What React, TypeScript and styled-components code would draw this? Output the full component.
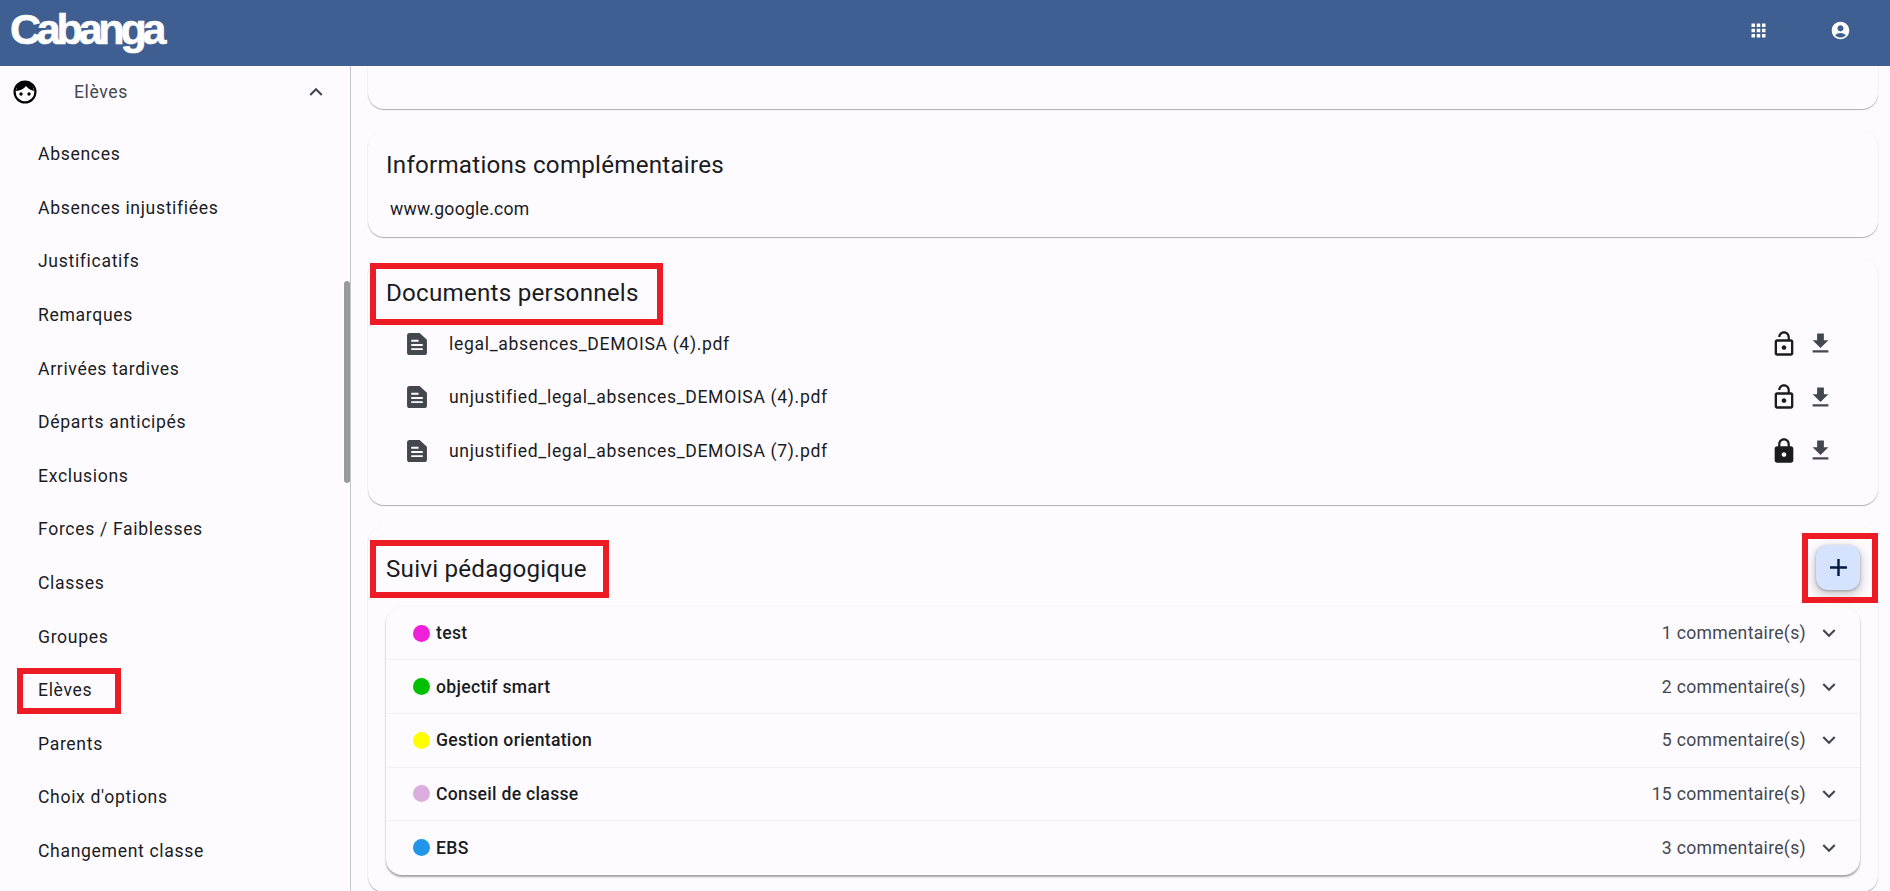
import styled, { createGlobalStyle } from 'styled-components';
import {
    MdAccountCircle,
    MdAdd,
    MdApps,
    MdExpandLess,
    MdExpandMore,
    MdFileDownload,
    MdLock,
    MdLockOpen,
} from 'react-icons/md';

const GlobalStyle = createGlobalStyle`
    html, body {
        margin: 0;
        height: 100%;
        overflow: hidden;
        background: #fdfbff;
        font-family: Roboto, "Liberation Sans", sans-serif;
        color: #1a1c1e;
    }
`;

const Page = styled.div`
    position: relative;
    display: flex;
    flex-direction: column;
    height: 100vh;
    overflow: hidden;
`;

const Header = styled.header`
    flex: none;
    height: 66px;
    display: flex;
    align-items: center;
    background: #3f5f92;
    color: #fff;
`;

const Logo = styled.div`
    font-family: "Liberation Sans", Arial, sans-serif;
    font-weight: 700;
    font-size: 43px;
    line-height: 50px;
    letter-spacing: -4.2px;
    -webkit-text-stroke: 0.6px #fff;
    margin: -8px 0 0 10px;
`;

const HeaderIcons = styled.div`
    margin-left: auto;
    display: flex;
    align-items: center;
    gap: 61px;
    padding: 0 39px 6px 0;
    svg {
        display: block;
    }
`;

const Body = styled.div`
    flex: 1;
    min-height: 0;
    display: flex;
`;

const Sidebar = styled.nav`
    position: relative;
    flex: none;
    width: 350px;
    border-right: 1px solid #c4c6d0;
    overflow: hidden;
`;

const Thumb = styled.div`
    position: absolute;
    top: 215px;
    right: 0;
    width: 6px;
    height: 202px;
    border-radius: 3px;
    background: #9a9a9a;
`;

const GroupRow = styled.div`
    height: 52px;
    display: flex;
    align-items: center;
    padding: 0 21px 0 13px;
    font-size: 17.6px;
    letter-spacing: 0.6px;
    color: #44474e;
`;

const GroupLabel = styled.span`
    margin-left: 37px;
    flex: 1;
`;

const SubList = styled.div`
    margin-top: 9.5px;
`;

const SubItem = styled.div`
    height: 53.6px;
    display: flex;
    align-items: center;
    padding-left: 38px;
    font-size: 17.6px;
    letter-spacing: 0.66px;
    color: #1a1c1e;
`;

const Main = styled.main`
    flex: 1;
    min-width: 0;
    display: flex;
    flex-direction: column;
    gap: 22px;
    padding: 0 12px 0 17px;
    overflow: hidden;
`;

const Card = styled.section<{ $height?: number }>`
    flex: none;
    box-sizing: border-box;
    height: ${(p) => (p.$height ? `${p.$height}px` : 'auto')};
    background: #fdfbff;
    border-radius: 16px;
    box-shadow: 0 1px 1px rgba(0, 0, 0, 0.3), 0 0 2px rgba(0, 0, 0, 0.04);
`;

const ClippedCard = styled(Card)`
    margin-top: -30px;
`;

const InfoCard = styled(Card)`
    padding: 20px 16px 16px 18px;
`;

const DocsCard = styled(Card)`
    padding: 20px 0 27px 18px;
`;

const TrackCard = styled(Card)`
    padding: 18px 18px 0;
`;

const Title = styled.h2`
    margin: 0;
    font-size: 24.2px;
    line-height: 28px;
    font-weight: 400;
    letter-spacing: 0.22px;
    color: #1a1c1e;
`;

const InfoText = styled.div`
    margin: 18px 0 0 4px;
    font-size: 17.6px;
    line-height: 24px;
    letter-spacing: 0.25px;
`;

const DocList = styled.div`
    margin-top: 10px;
`;

const DocRow = styled.div`
    height: 53.6px;
    display: flex;
    align-items: center;
    padding: 0 44px 0 21px;
    font-size: 17.6px;
    letter-spacing: 0.66px;
`;

const DocName = styled.span`
    margin-left: 22px;
    flex: 1;
`;

const DocActions = styled.div`
    display: flex;
    align-items: center;
    gap: 9px;
    svg {
        display: block;
    }
`;

const DownloadIcon = styled(MdFileDownload)`
    color: #44474e;
`;

const TrackHeader = styled.div`
    height: 45px;
    display: flex;
    align-items: center;
    justify-content: space-between;
`;

const TrackTitle = styled(Title)`
    padding-top: 3px;
`;

const Fab = styled.button`
    width: 44px;
    height: 45px;
    padding: 0;
    border: none;
    border-radius: 12px;
    display: flex;
    align-items: center;
    justify-content: center;
    background: #d6e3ff;
    color: #001b3e;
    box-shadow: 0 1px 3px rgba(0, 0, 0, 0.3), 0 4px 8px 3px rgba(0, 0, 0, 0.15);
`;

const Accordion = styled.div`
    margin-top: 17px;
    border-radius: 16px;
    background: #fdfbff;
    box-shadow: 0 2px 2px rgba(0, 0, 0, 0.35), 0 0 3px rgba(0, 0, 0, 0.04);
`;

const AccordionRow = styled.div`
    box-sizing: border-box;
    height: 53.6px;
    display: flex;
    align-items: center;
    padding: 0 18px 0 27px;
    font-size: 17.6px;
    letter-spacing: 0.3px;
    border-bottom: 1px solid rgba(0, 0, 0, 0.045);
    &:last-child {
        border-bottom: none;
    }
`;

const Dot = styled.span<{ $color: string }>`
    flex: none;
    width: 17px;
    height: 17px;
    border-radius: 50%;
    background: ${(p) => p.$color};
`;

const RowName = styled.span`
    margin-left: 6px;
    flex: 1;
    font-weight: 500;
    color: #1a1c1e;
`;

const RowCount = styled.span`
    margin-right: 10px;
    color: #44474e;
`;

const ChevronDown = styled(MdExpandMore)`
    flex: none;
    color: #44474e;
`;

const Annotation = styled.div<{ $x: number; $y: number; $w: number; $h: number }>`
    position: absolute;
    box-sizing: border-box;
    left: ${(p) => p.$x}px;
    top: ${(p) => p.$y}px;
    width: ${(p) => p.$w}px;
    height: ${(p) => p.$h}px;
    border: 6px solid #ed1c24;
    pointer-events: none;
`;

const FaceIcon = () => (
    <svg width="24" height="24" viewBox="0 0 24 24" style={{ flex: 'none' }}>
        <circle cx="12" cy="12" r="10.4" fill="#fff" stroke="#000" strokeWidth="2.2" />
        <path d="M3 11C4 5 8 1.5 12 1.5S20 5 21 11C18 10.5 15 8.5 13 6C11 9 7 10.5 3 11Z" fill="#000" />
        <circle cx="8" cy="14" r="1.7" fill="#000" />
        <circle cx="16" cy="14" r="1.7" fill="#000" />
    </svg>
);

const DocIcon = () => (
    <svg width="20" height="22" viewBox="0 0 19 21" style={{ flex: 'none' }}>
        <path
            d="M2.5 0H12L19 6.5V18.5A2.5 2.5 0 0 1 16.500 21H2.500A2.500 2.500 0 0 1 0 18.500V2.500A2.500 2.500 0 0 1 2.500 0Z"
            fill="#44474e"
        />
        <path d="M4 6.500H11V8.300H4ZM4 10.500H15V12.300H4ZM4 14.500H15V16.300H4Z" fill="#fdfbff" />
    </svg>
);

const subItems = [
    'Absences',
    'Absences injustifiées',
    'Justificatifs',
    'Remarques',
    'Arrivées tardives',
    'Départs anticipés',
    'Exclusions',
    'Forces / Faiblesses',
    'Classes',
    'Groupes',
    'Elèves',
    'Parents',
    "Choix d'options",
    'Changement classe',
];

const documents = [
    { name: 'legal_absences_DEMOISA (4).pdf', locked: false },
    { name: 'unjustified_legal_absences_DEMOISA (4).pdf', locked: false },
    { name: 'unjustified_legal_absences_DEMOISA (7).pdf', locked: true },
];

const followUps = [
    { name: 'test', color: '#f01fd8', count: 1 },
    { name: 'objectif smart', color: '#00c000', count: 2 },
    { name: 'Gestion orientation', color: '#ffff00', count: 5 },
    { name: 'Conseil de classe', color: '#dcaede', count: 15 },
    { name: 'EBS', color: '#2196e8', count: 3 },
];

export default function App() {
    return (
        <Page>
            <GlobalStyle />
            <Header>
                <Logo>Cabanga</Logo>
                <HeaderIcons>
                    <MdApps size={21} />
                    <MdAccountCircle size={21} />
                </HeaderIcons>
            </Header>
            <Body>
                <Sidebar>
                    <GroupRow>
                        <FaceIcon />
                        <GroupLabel>Elèves</GroupLabel>
                        <MdExpandLess size={26} />
                    </GroupRow>
                    <SubList>
                        {subItems.map((item) => (
                            <SubItem key={item}>{item}</SubItem>
                        ))}
                    </SubList>
                    <Thumb />
                </Sidebar>
                <Main>
                    <ClippedCard $height={73} />
                    <InfoCard>
                        <Title>Informations complémentaires</Title>
                        <InfoText>www.google.com</InfoText>
                    </InfoCard>
                    <DocsCard>
                        <Title>Documents personnels</Title>
                        <DocList>
                            {documents.map((doc) => (
                                <DocRow key={doc.name}>
                                    <DocIcon />
                                    <DocName>{doc.name}</DocName>
                                    <DocActions>
                                        {doc.locked ? <MdLock size={28} /> : <MdLockOpen size={28} />}
                                        <DownloadIcon size={27} />
                                    </DocActions>
                                </DocRow>
                            ))}
                        </DocList>
                    </DocsCard>
                    <TrackCard $height={365}>
                        <TrackHeader>
                            <TrackTitle>Suivi pédagogique</TrackTitle>
                            <Fab>
                                <MdAdd size={29} />
                            </Fab>
                        </TrackHeader>
                        <Accordion>
                            {followUps.map((row) => (
                                <AccordionRow key={row.name}>
                                    <Dot $color={row.color} />
                                    <RowName>{row.name}</RowName>
                                    <RowCount>{row.count} commentaire(s)</RowCount>
                                    <ChevronDown size={26} />
                                </AccordionRow>
                            ))}
                        </Accordion>
                    </TrackCard>
                </Main>
            </Body>
            <Annotation $x={17} $y={668} $w={104} $h={46} />
            <Annotation $x={370} $y={263} $w={293} $h={62} />
            <Annotation $x={370} $y={540} $w={239} $h={58} />
            <Annotation $x={1802} $y={533} $w={76} $h={70} />
        </Page>
    );
}
